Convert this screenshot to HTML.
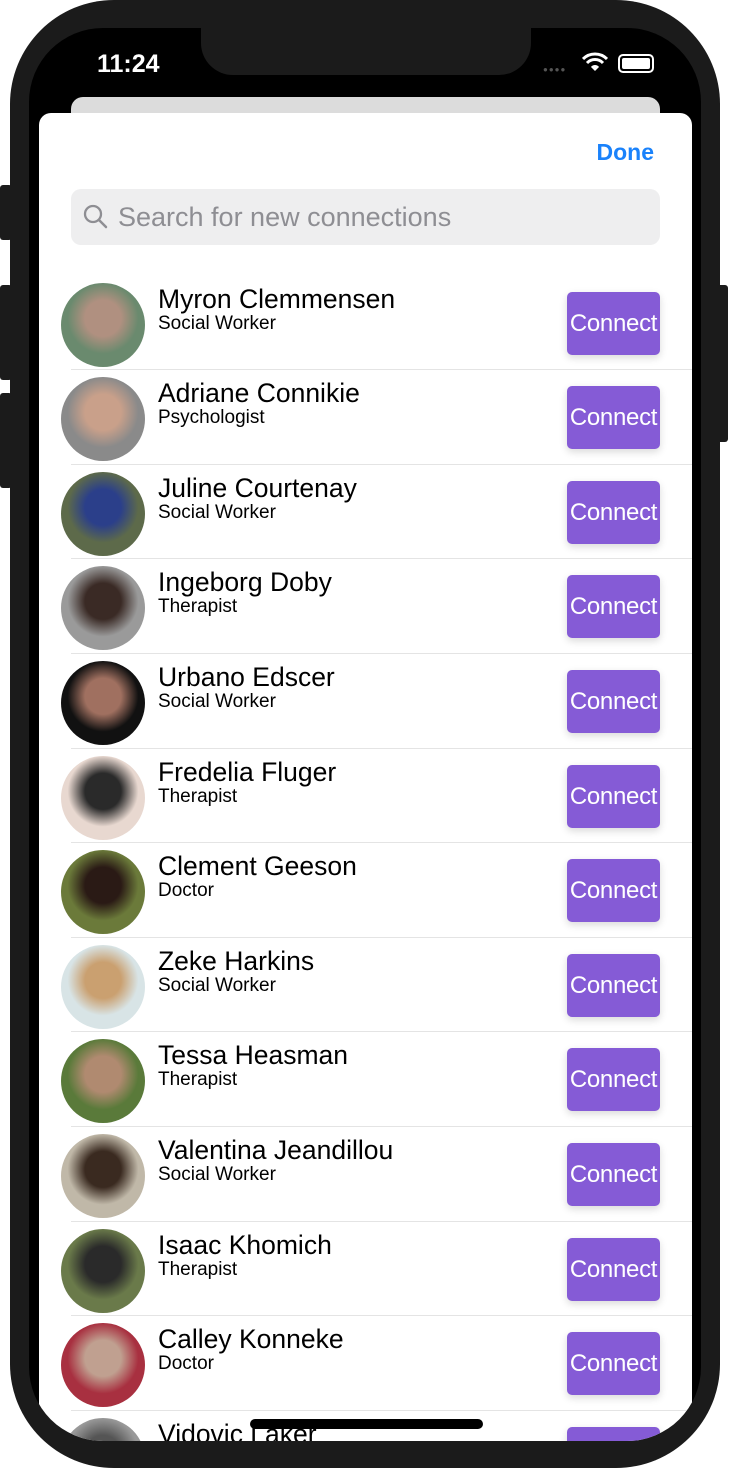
<!DOCTYPE html>
<html><head><style>
*{margin:0;padding:0;box-sizing:border-box}
body{width:731px;height:1470px;background:#fff;position:relative;overflow:hidden;font-family:"Liberation Sans",sans-serif}
.btnside{position:absolute;background:#1b1b1b;border-radius:3px}
.frame{position:absolute;left:10px;top:0;width:710px;height:1468px;background:#1b1b1b;border-radius:104px}
.screen{position:absolute;left:29px;top:28px;width:672px;height:1413px;background:#000;border-radius:74px;overflow:hidden}
.time{position:absolute;left:68px;top:22px;color:#fff;font-size:25px;font-weight:bold}
.card{position:absolute;left:42px;top:69px;width:589px;height:40px;background:#dcdcdc;border-radius:12px}
.sheet{position:absolute;left:10px;top:85px;width:653px;height:1400px;background:#fff;border-radius:12px}
.done{position:absolute;right:38px;top:26px;color:#1a82fb;font-size:23px;font-weight:bold}
.search{position:absolute;left:32px;top:76px;width:589px;height:56px;background:#eeeeef;border-radius:10px;color:#8e8e93;font-size:27px;line-height:56px;padding-left:47px}
.row{position:absolute;left:0;width:653px;height:94.7px}
.sep{position:absolute;left:32px;right:0;top:0;border-top:1px solid #e4e4e4}
.av{position:absolute;left:22px;top:8px;width:84px;height:84px;border-radius:50%}
.nm{position:absolute;left:119px;top:9px;font-size:26.5px;color:#000}
.rl{position:absolute;left:119px;top:38px;font-size:19px;color:#000}
.cb{position:absolute;left:528px;top:17px;width:93px;height:63px;background:#855bd6;border-radius:5px;color:#fff;font-size:24px;line-height:63px;text-align:center;box-shadow:0 3px 8px rgba(0,0,0,.15);letter-spacing:-0.3px}
.home{position:absolute;left:250px;top:1419px;width:233px;height:10px;background:#000;border-radius:5px}
</style></head><body>
<div class="btnside" style="left:0;top:185px;width:12px;height:55px"></div>
<div class="btnside" style="left:0;top:285px;width:12px;height:95px"></div>
<div class="btnside" style="left:0;top:393px;width:12px;height:95px"></div>
<div class="btnside" style="left:716px;top:285px;width:12px;height:157px"></div>
<div class="frame"></div>
<div class="screen">
 <div style="position:absolute;left:172px;top:-10px;width:330px;height:57px;background:#1b1b1b;border-radius:0 0 32px 32px"></div>
 <div class="time">11:24</div>
 <div style="position:absolute;left:514px;top:40px;width:28px;height:4px;color:#555;font-size:8px;letter-spacing:1px;line-height:4px">●●●●</div>
 <svg style="position:absolute;left:553px;top:24px" width="26" height="20" viewBox="0 0 26 20"><path d="M1 7a17 17 0 0 1 24 0" stroke="#fff" stroke-width="3" fill="none"/><path d="M5 11a11 11 0 0 1 16 0" stroke="#fff" stroke-width="3" fill="none"/><path d="M9 15a5 5 0 0 1 8 0L13 19z" fill="#fff"/></svg>
 <div style="position:absolute;left:589px;top:26px;width:36px;height:19px;border:2px solid #fff;border-radius:5px;padding:2px"><div style="width:100%;height:100%;background:#fff;border-radius:2px"></div></div>
 <div class="card"></div>
 <div class="sheet">
  <div class="done">Done</div>
  <div class="search"><svg style="position:absolute;left:12px;top:15px" width="26" height="26" viewBox="0 0 26 26"><circle cx="10" cy="10" r="8" stroke="#8e8e93" stroke-width="2.3" fill="none"/><path d="M16 16l7 7" stroke="#8e8e93" stroke-width="2.5" stroke-linecap="round"/></svg>Search for new connections</div>
  <div id="list"></div>
 </div>
</div>
<div class="home"></div>
<script>
var d=[["Myron Clemmensen","Social Worker","#6a8a6e","#b09080"],["Adriane Connikie","Psychologist","#8a8a8a","#c9a08a"],["Juline Courtenay","Social Worker","#5d6a4a","#2b3f8a"],["Ingeborg Doby","Therapist","#9a9a9a","#3a2a25"],["Urbano Edscer","Social Worker","#111","#a07060"],["Fredelia Fluger","Therapist","#e8d8d0","#2a2a2a"],["Clement Geeson","Doctor","#6b7a3a","#2a1a15"],["Zeke Harkins","Social Worker","#d8e4e6","#caa070"],["Tessa Heasman","Therapist","#5a7a3a","#b08a70"],["Valentina Jeandillou","Social Worker","#c0b8a8","#3a2a20"],["Isaac Khomich","Therapist","#6a7a4a","#2a2a2a"],["Calley Konneke","Doctor","#a83040","#c0a090"],["Vidovic Laker","","#999","#555"]];
var h='';d.forEach(function(r,i){var t=161.5+i*94.6;h+='<div class="row" style="top:'+t+'px">'+(i?'<div class="sep"></div>':'')+'<div class="av" style="background:radial-gradient(circle at 50% 42%,'+r[3]+' 0 28%,'+r[2]+' 55%)"></div><div class="nm">'+r[0]+'</div><div class="rl">'+r[1]+'</div><div class="cb">Connect</div></div>';});
document.getElementById('list').innerHTML=h;
</script>
</body></html>
